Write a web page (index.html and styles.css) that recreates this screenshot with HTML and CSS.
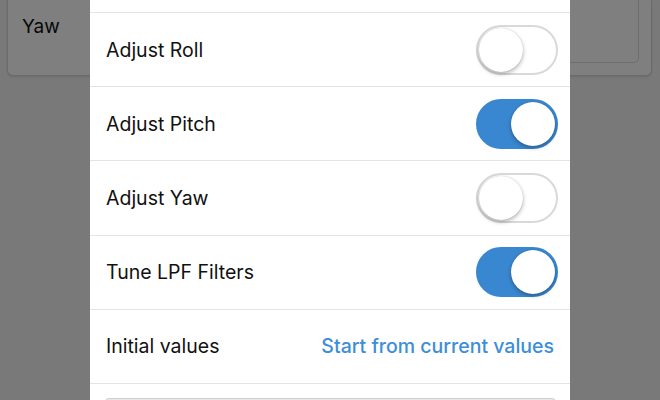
FILE: index.html
```html
<!DOCTYPE html>
<html>
<head>
<meta charset="utf-8">
<link rel="stylesheet" href="styles.css">
</head>
<body>
<div class="page">
  <div class="card">
    <div class="card-label">Yaw</div>
    <div class="card-inner"></div>
  </div>
</div>
<div class="backdrop"></div>
<div class="modal">
  <div class="row-partial"></div>
  <div class="row"><span class="label">Adjust Roll</span><span class="toggle"><span class="knob"></span></span></div>
  <div class="row"><span class="label">Adjust Pitch</span><span class="toggle on"><span class="knob"></span></span></div>
  <div class="row"><span class="label">Adjust Yaw</span><span class="toggle"><span class="knob"></span></span></div>
  <div class="row"><span class="label">Tune LPF Filters</span><span class="toggle on"><span class="knob"></span></span></div>
  <div class="row"><span class="label">Initial values</span><span class="link">Start from current values</span></div>
  <div class="footer"><div class="button"></div></div>
</div>
</body>
</html>
```
FILE: styles.css
```css
html, body {
  margin: 0;
  padding: 0;
  width: 660px;
  height: 400px;
  overflow: hidden;
  background: #f2f2f2;
  font-family: Inter, "Liberation Sans", Arial, sans-serif;
}
.page {
  padding: 0 8px 0 7px;
}
.card {
  height: 76px;
  box-sizing: border-box;
  background: #ffffff;
  border: 1px solid #d6d6d6;
  border-top: none;
  border-radius: 0 0 6px 6px;
  box-shadow: 0 1px 2px rgba(0,0,0,0.12);
  display: flex;
  align-items: flex-start;
}
.card-label {
  flex: 1;
  padding: 16px 0 0 14px;
  font-size: 19px;
  line-height: 22px;
  color: #111;
}
.card-inner {
  width: 330px;
  height: 63px;
  box-sizing: border-box;
  margin-right: 12px;
  border: 1px solid #dcdcdc;
  border-top: none;
  border-radius: 0 0 5px 5px;
}
.backdrop {
  position: fixed;
  inset: 0;
  background: rgba(0,0,0,0.5);
}
.modal {
  position: absolute;
  left: 90px;
  top: 0;
  width: 480px;
  height: 400px;
  overflow: hidden;
  background: #ffffff;
  display: flex;
  flex-direction: column;
}
.row-partial {
  flex: none;
  height: 13px;
  box-sizing: border-box;
  border-bottom: 1px solid #e4e4e4;
}
.row {
  flex: none;
  height: 74.2px;
  box-sizing: border-box;
  border-bottom: 1px solid #e4e4e4;
  display: flex;
  align-items: center;
  justify-content: space-between;
  padding: 0 12px 0 16px;
}
.label {
  font-size: 19.5px;
  color: #111;
}
.link {
  font-size: 19.5px;
  font-weight: 500;
  color: #3d8ed8;
  margin-right: 4px;
}
.toggle {
  width: 82px;
  height: 50px;
  box-sizing: border-box;
  border-radius: 25px;
  border: 2px solid #d9d9d9;
  background: #ffffff;
  display: flex;
  align-items: center;
  padding: 0 1px;
  justify-content: flex-start;
}
.toggle.on {
  background: #3987d1;
  border-color: #3987d1;
  justify-content: flex-end;
}
.knob {
  width: 44px;
  height: 44px;
  border-radius: 50%;
  background: #ffffff;
  box-shadow: 0 2px 4px rgba(0,0,0,0.3), 0 0 1px rgba(0,0,0,0.2);
}
.footer {
  flex: none;
  padding: 14px 14px 0 15px;
}
.button {
  height: 40px;
  background: #e8e8e8;
  border: 1px solid #cdcdcd;
  border-radius: 4px;
}
```
